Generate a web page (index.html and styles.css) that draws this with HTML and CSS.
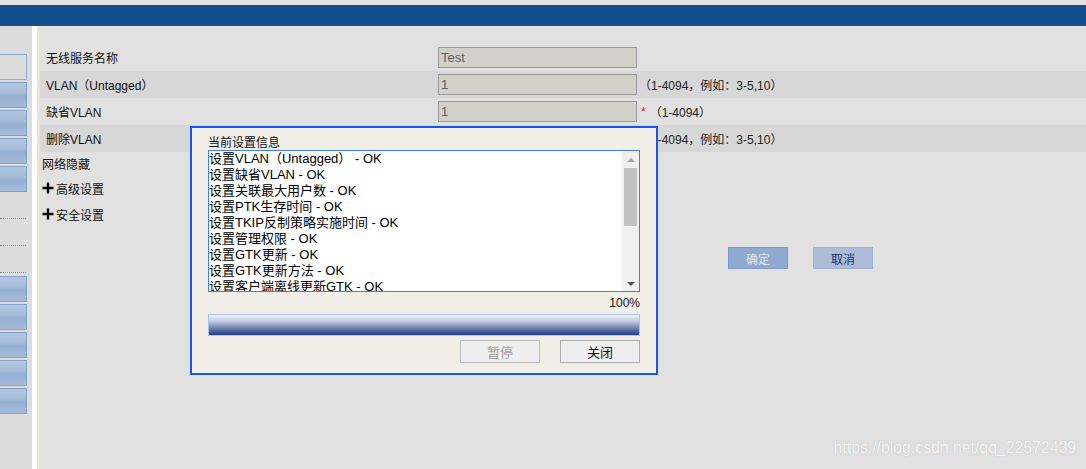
FILE: index.html
```html
<!DOCTYPE html>
<html lang="zh-CN">
<head>
<meta charset="utf-8">
<title>无线服务设置</title>
<link rel="stylesheet" href="styles.css">
</head>
<body>
<div class="top-strip"></div>
<div class="banner"></div>
<div class="main">
  <div class="sidebar">
    <div class="sb-btn sb-btn-light"></div>
    <div class="sb-btn"></div>
    <div class="sb-btn"></div>
    <div class="sb-btn"></div>
    <div class="sb-btn"></div>
    <div class="sb-dots first-dots"></div>
    <div class="sb-dots"></div>
    <div class="sb-dots"></div>
    <div class="sb-btn"></div>
    <div class="sb-btn"></div>
    <div class="sb-btn"></div>
    <div class="sb-btn"></div>
    <div class="sb-btn"></div>
  </div>
  <div class="divider"></div>
  <div class="edge"></div>
  <div class="content">
    <div class="form">
      <div class="row">
        <div class="label">无线服务名称</div>
        <div class="field"><div class="input">Test</div></div>
      </div>
      <div class="row alt">
        <div class="label">VLAN（Untagged）</div>
        <div class="field"><div class="input">1</div><span class="hint">（1-4094，例如：3-5,10）</span></div>
      </div>
      <div class="row">
        <div class="label">缺省VLAN</div>
        <div class="field"><div class="input">1</div><span class="req">*</span><span class="hint">（1-4094）</span></div>
      </div>
      <div class="row alt">
        <div class="label">删除VLAN</div>
        <div class="field"><div class="input">1</div><span class="hint">（1-4094，例如：3-5,10）</span></div>
      </div>
    </div>
    <div class="extra">
      <div class="extra-row">网络隐藏</div>
      <div class="extra-row"><svg class="plus" width="12" height="12" viewBox="0 0 12 12"><path d="M6 0.5V11.5M0.5 6H11.5" stroke="#000" stroke-width="2.4"/></svg>高级设置</div>
      <div class="extra-row"><svg class="plus" width="12" height="12" viewBox="0 0 12 12"><path d="M6 0.5V11.5M0.5 6H11.5" stroke="#000" stroke-width="2.4"/></svg>安全设置</div>
    </div>
    <div class="actions">
      <button class="act ok">确定</button>
      <button class="act cancel">取消</button>
    </div>

    <div class="dialog">
      <div class="dlg-title">当前设置信息</div>
      <div class="listbox">
        <div class="list-lines">
          <div>设置VLAN（Untagged） - OK</div>
          <div>设置缺省VLAN - OK</div>
          <div>设置关联最大用户数 - OK</div>
          <div>设置PTK生存时间 - OK</div>
          <div>设置TKIP反制策略实施时间 - OK</div>
          <div>设置管理权限 - OK</div>
          <div>设置GTK更新 - OK</div>
          <div>设置GTK更新方法 - OK</div>
          <div class="partial">设置客户端离线更新GTK - OK</div>
        </div>
        <div class="scrollbar">
          <div class="arrow-up"></div>
          <div class="thumb"></div>
          <div class="track"></div>
          <div class="arrow-down"></div>
        </div>
      </div>
      <div class="percent">100%</div>
      <div class="progress"></div>
      <div class="dlg-buttons">
        <button class="dbtn disabled">暂停</button>
        <button class="dbtn">关闭</button>
      </div>
    </div>

    <div class="watermark">https://blog.csdn.net/qq_22572439</div>
  </div>
</div>
</body>
</html>
```
FILE: styles.css
```css
html, body {
  margin: 0;
  padding: 0;
}
body {
  width: 1086px;
  height: 469px;
  overflow: hidden;
  background: #e1e1e1;
  font-family: "Liberation Sans", "Noto Sans CJK SC", sans-serif;
  font-size: 12px;
  color: #000;
}
.top-strip {
  height: 5px;
  background: #e2e2e2;
}
.banner {
  height: 21px;
  background: #124f8b;
}
.main {
  display: flex;
  height: 443px;
}
.sidebar {
  width: 32px;
  background: #dcdcdc;
  padding-top: 28px;
  box-sizing: border-box;
  overflow: hidden;
}
.sb-btn {
  width: 40px;
  height: 24px;
  margin-left: -15px;
  margin-bottom: 2px;
  border: 1px solid #7fa2cf;
  background: linear-gradient(#b3c7df 0%, #a6bcd8 40%, #93afd2 55%, #a5bbd8 100%);
}
.sb-btn-light {
  background: #dcdcdc;
  border-color: #8eaedb;
}
.sb-dots {
  height: 0;
  width: 26px;
  border-top: 1px dotted #8a8a8a;
  margin-top: 26px;
}
.first-dots {
  margin-top: 26px;
}
.sb-dots + .sb-btn {
  margin-top: 3px;
}
.divider {
  width: 5px;
  background: #ffffff;
}
.edge {
  width: 2px;
  background: #ece8d6;
}
.content {
  position: relative;
  flex: 1;
  background: #e1e1e1;
  padding-top: 18px;
  padding-left: 1px;
}
.row {
  display: flex;
  align-items: center;
  height: 27px;
}
.row.alt {
  background: #d7d7d7;
}
.label {
  width: 398px;
  padding-left: 6px;
  box-sizing: border-box;
  color: #111;
}
.field {
  display: flex;
  align-items: center;
}
.input {
  width: 199px;
  height: 21px;
  box-sizing: border-box;
  border: 1px solid #9a9a9a;
  background: #d1d1ca;
  color: #5e5e5e;
  font-size: 13px;
  line-height: 19px;
  padding-left: 2px;
}
.hint {
  margin-left: 2px;
  color: #222;
}
.req {
  color: #e02020;
  margin-left: 4px;
  margin-right: 2px;
}
.extra {
  padding-left: 2px;
}
.extra-row {
  display: flex;
  align-items: center;
  height: 26px;
  color: #111;
}
.extra-row:first-child {
  height: 23px;
}
.plus {
  margin-right: 2px;
}
.actions {
  display: flex;
  gap: 25px;
  padding-left: 688px;
  margin-top: 20px;
}
.act {
  width: 60px;
  height: 22px;
  font-family: inherit;
  font-size: 12px;
  padding: 0;
  border: 1px solid;
}
.act.ok {
  background: #8fa9d0;
  border-color: #7c9acb;
  color: #e2e6ee;
}
.act.cancel {
  background: #adbdd8;
  border-color: #9cb0d2;
  color: #1c2d6e;
}
.dialog {
  position: absolute;
  left: 151px;
  top: 100px;
  width: 468px;
  height: 249px;
  box-sizing: border-box;
  border: 2px solid #1557e8;
  background: #f1eee7;
  padding: 6px 16px 0 16px;
}
.dlg-title {
  height: 16px;
  line-height: 18px;
  color: #111;
}
.listbox {
  display: flex;
  height: 142px;
  box-sizing: border-box;
  border: 1px solid #3c7ff0;
  background: #fff;
}
.list-lines {
  flex: 1;
  overflow: hidden;
  line-height: 16px;
  font-size: 13px;
  color: #000;
}
.list-lines div {
  white-space: nowrap;
}
.scrollbar {
  width: 17px;
  background: #f0f0f0;
  display: flex;
  flex-direction: column;
  align-items: center;
}
.arrow-up {
  width: 0;
  height: 0;
  border-left: 4px solid transparent;
  border-right: 4px solid transparent;
  border-bottom: 4px solid #a3a3a3;
  margin-top: 7px;
}
.thumb {
  width: 13px;
  height: 58px;
  background: #c1c1c1;
  margin-top: 6px;
}
.track {
  flex: 1;
}
.arrow-down {
  width: 0;
  height: 0;
  border-left: 4px solid transparent;
  border-right: 4px solid transparent;
  border-top: 4px solid #505050;
  margin-bottom: 5px;
}
.percent {
  text-align: right;
  height: 22px;
  line-height: 22px;
  color: #111;
}
.progress {
  height: 22px;
  box-sizing: border-box;
  border: 1px solid #a9c4f2;
  background: linear-gradient(#f3f5fb 0%, #c6cde2 30%, #7f8fbb 60%, #3f5a95 85%, #233f80 100%);
}
.dlg-buttons {
  display: flex;
  justify-content: flex-end;
  gap: 20px;
  margin-top: 4px;
}
.dbtn {
  width: 80px;
  height: 23px;
  font-family: inherit;
  font-size: 13px;
  padding: 0;
  background: #efefef;
  border: 1px solid #adadad;
  color: #111;
}
.dbtn.disabled {
  color: #9a9a9a;
  border-color: #bcbcbc;
}
.watermark {
  position: absolute;
  right: 10px;
  bottom: 12px;
  font-size: 15.8px;
  color: #f6f6f6;
  text-shadow: 0 0 1px #b0b0b0;
}
```
